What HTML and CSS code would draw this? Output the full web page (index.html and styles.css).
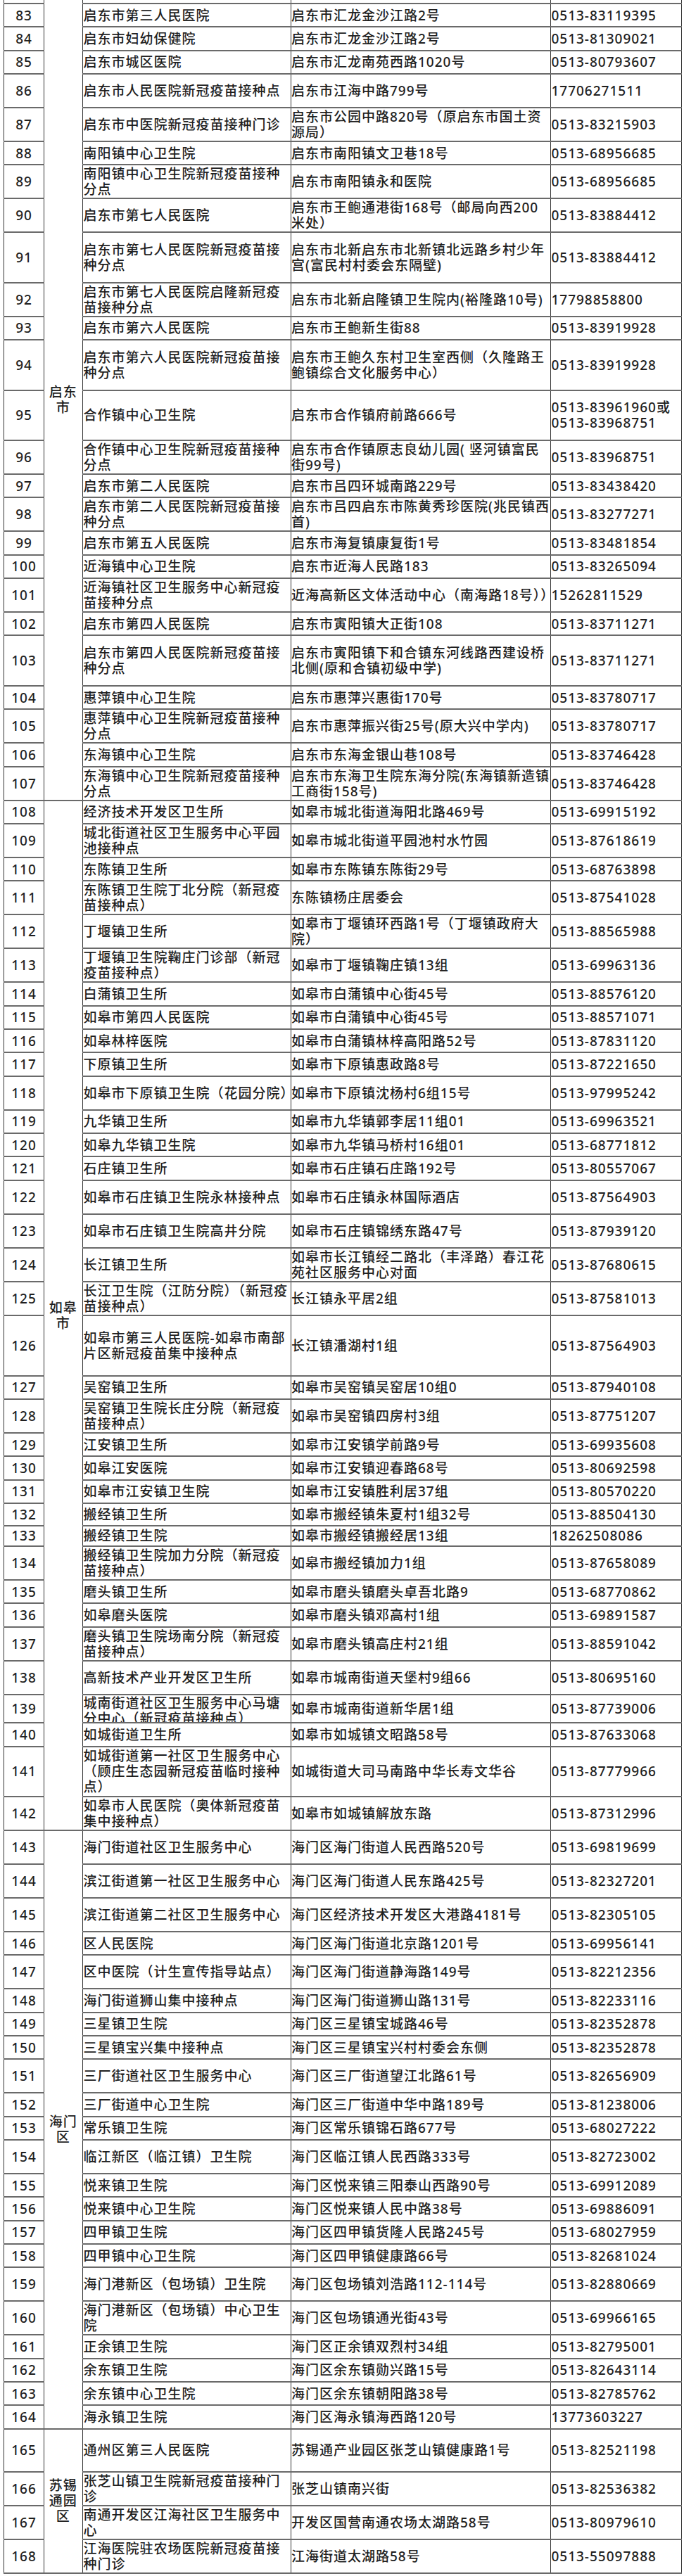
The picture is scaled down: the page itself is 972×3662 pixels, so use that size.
FILE: index.html
```html
<!DOCTYPE html>
<html lang="zh-CN">
<head>
<meta charset="utf-8">
<title>新冠疫苗接种点</title>
<link rel="stylesheet" href="styles.css">
</head>
<body>
<table class="sheet">
<colgroup><col class="col-n"><col class="col-c"><col class="col-m"><col class="col-a"><col class="col-p"></colgroup>
<tbody>
<tr class="hp"><td class="n"></td><td class="c" rowspan="26">启东市</td><td class="m"></td><td class="a"></td><td class="p"></td></tr>
<tr class="s"><td class="n">83</td><td class="m">启东市第三人民医院</td><td class="a">启东市汇龙金沙江路2号</td><td class="p">0513-83119395</td></tr>
<tr class="s"><td class="n">84</td><td class="m">启东市妇幼保健院</td><td class="a">启东市汇龙金沙江路2号</td><td class="p">0513-81309021</td></tr>
<tr class="s"><td class="n">85</td><td class="m">启东市城区医院</td><td class="a">启东市汇龙南苑西路1020号</td><td class="p">0513-80793607</td></tr>
<tr class="d"><td class="n">86</td><td class="m">启东市人民医院新冠疫苗接种点</td><td class="a">启东市江海中路799号</td><td class="p">17706271511</td></tr>
<tr class="d"><td class="n">87</td><td class="m">启东市中医院新冠疫苗接种门诊</td><td class="a">启东市公园中路820号（原启东市国土资源局）</td><td class="p">0513-83215903</td></tr>
<tr class="s"><td class="n">88</td><td class="m">南阳镇中心卫生院</td><td class="a">启东市南阳镇文卫巷18号</td><td class="p">0513-68956685</td></tr>
<tr class="d"><td class="n">89</td><td class="m">南阳镇中心卫生院新冠疫苗接种分点</td><td class="a">启东市南阳镇永和医院</td><td class="p">0513-68956685</td></tr>
<tr class="d"><td class="n">90</td><td class="m">启东市第七人民医院</td><td class="a">启东市王鲍通港街168号（邮局向西200米处）</td><td class="p">0513-83884412</td></tr>
<tr class="t"><td class="n">91</td><td class="m">启东市第七人民医院新冠疫苗接种分点</td><td class="a">启东市北新启东市北新镇北远路乡村少年宫(富民村村委会东隔壁)</td><td class="p">0513-83884412</td></tr>
<tr class="d"><td class="n">92</td><td class="m">启东市第七人民医院启隆新冠疫苗接种分点</td><td class="a">启东市北新启隆镇卫生院内(裕隆路10号)</td><td class="p">17798858800</td></tr>
<tr class="s"><td class="n">93</td><td class="m">启东市第六人民医院</td><td class="a">启东市王鲍新生街88</td><td class="p">0513-83919928</td></tr>
<tr class="t"><td class="n">94</td><td class="m">启东市第六人民医院新冠疫苗接种分点</td><td class="a">启东市王鲍久东村卫生室西侧（久隆路王鲍镇综合文化服务中心）</td><td class="p">0513-83919928</td></tr>
<tr class="t"><td class="n">95</td><td class="m">合作镇中心卫生院</td><td class="a">启东市合作镇府前路666号</td><td class="p">0513-83961960或0513-83968751</td></tr>
<tr class="d"><td class="n">96</td><td class="m">合作镇中心卫生院新冠疫苗接种分点</td><td class="a">启东市合作镇原志良幼儿园( 竖河镇富民街99号)</td><td class="p">0513-83968751</td></tr>
<tr class="s"><td class="n">97</td><td class="m">启东市第二人民医院</td><td class="a">启东市吕四环城南路229号</td><td class="p">0513-83438420</td></tr>
<tr class="d"><td class="n">98</td><td class="m">启东市第二人民医院新冠疫苗接种分点</td><td class="a">启东市吕四启东市陈黄秀珍医院(兆民镇西首)</td><td class="p">0513-83277271</td></tr>
<tr class="s"><td class="n">99</td><td class="m">启东市第五人民医院</td><td class="a">启东市海复镇康复街1号</td><td class="p">0513-83481854</td></tr>
<tr class="s"><td class="n">100</td><td class="m">近海镇中心卫生院</td><td class="a">启东市近海人民路183</td><td class="p">0513-83265094</td></tr>
<tr class="d"><td class="n">101</td><td class="m">近海镇社区卫生服务中心新冠疫苗接种分点</td><td class="a">近海高新区文体活动中心（南海路18号））</td><td class="p">15262811529</td></tr>
<tr class="s"><td class="n">102</td><td class="m">启东市第四人民医院</td><td class="a">启东市寅阳镇大正街108</td><td class="p">0513-83711271</td></tr>
<tr class="t"><td class="n">103</td><td class="m">启东市第四人民医院新冠疫苗接种分点</td><td class="a">启东市寅阳镇下和合镇东河线路西建设桥北侧(原和合镇初级中学)</td><td class="p">0513-83711271</td></tr>
<tr class="s"><td class="n">104</td><td class="m">惠萍镇中心卫生院</td><td class="a">启东市惠萍兴惠街170号</td><td class="p">0513-83780717</td></tr>
<tr class="d"><td class="n">105</td><td class="m">惠萍镇中心卫生院新冠疫苗接种分点</td><td class="a">启东市惠萍振兴街25号(原大兴中学内)</td><td class="p">0513-83780717</td></tr>
<tr class="s"><td class="n">106</td><td class="m">东海镇中心卫生院</td><td class="a">启东市东海金银山巷108号</td><td class="p">0513-83746428</td></tr>
<tr class="d"><td class="n">107</td><td class="m">东海镇中心卫生院新冠疫苗接种分点</td><td class="a">启东市东海卫生院东海分院(东海镇新造镇工商街158号)</td><td class="p">0513-83746428</td></tr>
<tr class="s"><td class="n">108</td><td class="c" rowspan="35">如皋市</td><td class="m">经济技术开发区卫生所</td><td class="a">如皋市城北街道海阳北路469号</td><td class="p">0513-69915192</td></tr>
<tr class="d"><td class="n">109</td><td class="m">城北街道社区卫生服务中心平园池接种点</td><td class="a">如皋市城北街道平园池村水竹园</td><td class="p">0513-87618619</td></tr>
<tr class="s"><td class="n">110</td><td class="m">东陈镇卫生所</td><td class="a">如皋市东陈镇东陈街29号</td><td class="p">0513-68763898</td></tr>
<tr class="d"><td class="n">111</td><td class="m">东陈镇卫生院丁北分院（新冠疫苗接种点）</td><td class="a">东陈镇杨庄居委会</td><td class="p">0513-87541028</td></tr>
<tr class="d"><td class="n">112</td><td class="m">丁堰镇卫生所</td><td class="a">如皋市丁堰镇环西路1号（丁堰镇政府大院）</td><td class="p">0513-88565988</td></tr>
<tr class="d"><td class="n">113</td><td class="m">丁堰镇卫生院鞠庄门诊部（新冠疫苗接种点）</td><td class="a">如皋市丁堰镇鞠庄镇13组</td><td class="p">0513-69963136</td></tr>
<tr class="s"><td class="n">114</td><td class="m">白蒲镇卫生所</td><td class="a">如皋市白蒲镇中心街45号</td><td class="p">0513-88576120</td></tr>
<tr class="s"><td class="n">115</td><td class="m">如皋市第四人民医院</td><td class="a">如皋市白蒲镇中心街45号</td><td class="p">0513-88571071</td></tr>
<tr class="s"><td class="n">116</td><td class="m">如皋林梓医院</td><td class="a">如皋市白蒲镇林梓高阳路52号</td><td class="p">0513-87831120</td></tr>
<tr class="s"><td class="n">117</td><td class="m">下原镇卫生所</td><td class="a">如皋市下原镇惠政路8号</td><td class="p">0513-87221650</td></tr>
<tr class="d"><td class="n">118</td><td class="m">如皋市下原镇卫生院（花园分院）</td><td class="a">如皋市下原镇沈杨村6组15号</td><td class="p">0513-97995242</td></tr>
<tr class="s"><td class="n">119</td><td class="m">九华镇卫生所</td><td class="a">如皋市九华镇郭李居11组01</td><td class="p">0513-69963521</td></tr>
<tr class="s"><td class="n">120</td><td class="m">如皋九华镇卫生院</td><td class="a">如皋市九华镇马桥村16组01</td><td class="p">0513-68771812</td></tr>
<tr class="s"><td class="n">121</td><td class="m">石庄镇卫生所</td><td class="a">如皋市石庄镇石庄路192号</td><td class="p">0513-80557067</td></tr>
<tr class="d"><td class="n">122</td><td class="m">如皋市石庄镇卫生院永林接种点</td><td class="a">如皋市石庄镇永林国际酒店</td><td class="p">0513-87564903</td></tr>
<tr class="d"><td class="n">123</td><td class="m">如皋市石庄镇卫生院高井分院</td><td class="a">如皋市石庄镇锦绣东路47号</td><td class="p">0513-87939120</td></tr>
<tr class="d"><td class="n">124</td><td class="m">长江镇卫生所</td><td class="a">如皋市长江镇经二路北（丰泽路）春江花苑社区服务中心对面</td><td class="p">0513-87680615</td></tr>
<tr class="d"><td class="n">125</td><td class="m">长江卫生院（江防分院）（新冠疫苗接种点）</td><td class="a">长江镇永平居2组</td><td class="p">0513-87581013</td></tr>
<tr class="h86"><td class="n">126</td><td class="m">如皋市第三人民医院-如皋市南部片区新冠疫苗集中接种点</td><td class="a">长江镇潘湖村1组</td><td class="p">0513-87564903</td></tr>
<tr class="s"><td class="n">127</td><td class="m">吴窑镇卫生所</td><td class="a">如皋市吴窑镇吴窑居10组0</td><td class="p">0513-87940108</td></tr>
<tr class="d"><td class="n">128</td><td class="m">吴窑镇卫生院长庄分院（新冠疫苗接种点）</td><td class="a">如皋市吴窑镇四房村3组</td><td class="p">0513-87751207</td></tr>
<tr class="s"><td class="n">129</td><td class="m">江安镇卫生所</td><td class="a">如皋市江安镇学前路9号</td><td class="p">0513-69935608</td></tr>
<tr class="s"><td class="n">130</td><td class="m">如皋江安医院</td><td class="a">如皋市江安镇迎春路68号</td><td class="p">0513-80692598</td></tr>
<tr class="s"><td class="n">131</td><td class="m">如皋市江安镇卫生院</td><td class="a">如皋市江安镇胜利居37组</td><td class="p">0513-80570220</td></tr>
<tr class="h32"><td class="n">132</td><td class="m">搬经镇卫生所</td><td class="a">如皋市搬经镇朱夏村1组32号</td><td class="p">0513-88504130</td></tr>
<tr class="h29"><td class="n">133</td><td class="m">搬经镇卫生院</td><td class="a">如皋市搬经镇搬经居13组</td><td class="p">18262508086</td></tr>
<tr class="d"><td class="n">134</td><td class="m">搬经镇卫生院加力分院（新冠疫苗接种点）</td><td class="a">如皋市搬经镇加力1组</td><td class="p">0513-87658089</td></tr>
<tr class="s"><td class="n">135</td><td class="m">磨头镇卫生所</td><td class="a">如皋市磨头镇磨头卓吾北路9</td><td class="p">0513-68770862</td></tr>
<tr class="s"><td class="n">136</td><td class="m">如皋磨头医院</td><td class="a">如皋市磨头镇邓高村1组</td><td class="p">0513-69891587</td></tr>
<tr class="d"><td class="n">137</td><td class="m">磨头镇卫生院场南分院（新冠疫苗接种点）</td><td class="a">如皋市磨头镇高庄村21组</td><td class="p">0513-88591042</td></tr>
<tr class="d"><td class="n">138</td><td class="m">高新技术产业开发区卫生所</td><td class="a">如皋市城南街道天堡村9组66</td><td class="p">0513-80695160</td></tr>
<tr class="h41"><td class="n">139</td><td class="m"><div class="clip">城南街道社区卫生服务中心马塘分中心（新冠疫苗接种点）</div></td><td class="a">如皋市城南街道新华居1组</td><td class="p">0513-87739006</td></tr>
<tr class="s"><td class="n">140</td><td class="m">如城街道卫生所</td><td class="a">如皋市如城镇文昭路58号</td><td class="p">0513-87633068</td></tr>
<tr class="t"><td class="n">141</td><td class="m">如城街道第一社区卫生服务中心（顾庄生态园新冠疫苗临时接种点）</td><td class="a">如城街道大司马南路中华长寿文华谷</td><td class="p">0513-87779966</td></tr>
<tr class="d"><td class="n">142</td><td class="m">如皋市人民医院（奥体新冠疫苗集中接种点）</td><td class="a">如皋市如城镇解放东路</td><td class="p">0513-87312996</td></tr>
<tr class="d"><td class="n">143</td><td class="c" rowspan="22">海门区</td><td class="m">海门街道社区卫生服务中心</td><td class="a">海门区海门街道人民西路520号</td><td class="p">0513-69819699</td></tr>
<tr class="d"><td class="n">144</td><td class="m">滨江街道第一社区卫生服务中心</td><td class="a">海门区海门街道人民东路425号</td><td class="p">0513-82327201</td></tr>
<tr class="d"><td class="n">145</td><td class="m">滨江街道第二社区卫生服务中心</td><td class="a">海门区经济技术开发区大港路4181号</td><td class="p">0513-82305105</td></tr>
<tr class="s"><td class="n">146</td><td class="m">区人民医院</td><td class="a">海门区海门街道北京路1201号</td><td class="p">0513-69956141</td></tr>
<tr class="d"><td class="n">147</td><td class="m">区中医院（计生宣传指导站点）</td><td class="a">海门区海门街道静海路149号</td><td class="p">0513-82212356</td></tr>
<tr class="s"><td class="n">148</td><td class="m">海门街道狮山集中接种点</td><td class="a">海门区海门街道狮山路131号</td><td class="p">0513-82233116</td></tr>
<tr class="s"><td class="n">149</td><td class="m">三星镇卫生院</td><td class="a">海门区三星镇宝城路46号</td><td class="p">0513-82352878</td></tr>
<tr class="s"><td class="n">150</td><td class="m">三星镇宝兴集中接种点</td><td class="a">海门区三星镇宝兴村村委会东侧</td><td class="p">0513-82352878</td></tr>
<tr class="d"><td class="n">151</td><td class="m">三厂街道社区卫生服务中心</td><td class="a">海门区三厂街道望江北路61号</td><td class="p">0513-82656909</td></tr>
<tr class="s"><td class="n">152</td><td class="m">三厂街道中心卫生院</td><td class="a">海门区三厂街道中华中路189号</td><td class="p">0513-81238006</td></tr>
<tr class="s"><td class="n">153</td><td class="m">常乐镇卫生院</td><td class="a">海门区常乐镇锦石路677号</td><td class="p">0513-68027222</td></tr>
<tr class="d"><td class="n">154</td><td class="m">临江新区（临江镇）卫生院</td><td class="a">海门区临江镇人民西路333号</td><td class="p">0513-82723002</td></tr>
<tr class="s"><td class="n">155</td><td class="m">悦来镇卫生院</td><td class="a">海门区悦来镇三阳泰山西路90号</td><td class="p">0513-69912089</td></tr>
<tr class="s"><td class="n">156</td><td class="m">悦来镇中心卫生院</td><td class="a">海门区悦来镇人民中路38号</td><td class="p">0513-69886091</td></tr>
<tr class="s"><td class="n">157</td><td class="m">四甲镇卫生院</td><td class="a">海门区四甲镇货隆人民路245号</td><td class="p">0513-68027959</td></tr>
<tr class="s"><td class="n">158</td><td class="m">四甲镇中心卫生院</td><td class="a">海门区四甲镇健康路66号</td><td class="p">0513-82681024</td></tr>
<tr class="d"><td class="n">159</td><td class="m">海门港新区（包场镇）卫生院</td><td class="a">海门区包场镇刘浩路112-114号</td><td class="p">0513-82880669</td></tr>
<tr class="d"><td class="n">160</td><td class="m">海门港新区（包场镇）中心卫生院</td><td class="a">海门区包场镇通光街43号</td><td class="p">0513-69966165</td></tr>
<tr class="s"><td class="n">161</td><td class="m">正余镇卫生院</td><td class="a">海门区正余镇双烈村34组</td><td class="p">0513-82795001</td></tr>
<tr class="s"><td class="n">162</td><td class="m">余东镇卫生院</td><td class="a">海门区余东镇勋兴路15号</td><td class="p">0513-82643114</td></tr>
<tr class="s"><td class="n">163</td><td class="m">余东镇中心卫生院</td><td class="a">海门区余东镇朝阳路38号</td><td class="p">0513-82785762</td></tr>
<tr class="s"><td class="n">164</td><td class="m">海永镇卫生院</td><td class="a">海门区海永镇海西路120号</td><td class="p">13773603227</td></tr>
<tr class="h62"><td class="n">165</td><td class="c" rowspan="4">苏锡通园区</td><td class="m">通州区第三人民医院</td><td class="a">苏锡通产业园区张芝山镇健康路1号</td><td class="p">0513-82521198</td></tr>
<tr class="d"><td class="n">166</td><td class="m">张芝山镇卫生院新冠疫苗接种门诊</td><td class="a">张芝山镇南兴街</td><td class="p">0513-82536382</td></tr>
<tr class="d"><td class="n">167</td><td class="m">南通开发区江海社区卫生服务中心</td><td class="a">开发区国营南通农场太湖路58号</td><td class="p">0513-80979610</td></tr>
<tr class="d"><td class="n">168</td><td class="m">江海医院驻农场医院新冠疫苗接种门诊</td><td class="a">江海街道太湖路58号</td><td class="p">0513-55097888</td></tr>
</tbody>
</table>
</body>
</html>
```

FILE: styles.css
```css
html, body {
  margin: 0;
  padding: 0;
  background: #ffffff;
}

body {
  width: 972px;
  font-family: "Noto Sans", "Noto Sans CJK SC", sans-serif;
  font-size: 19px;
  font-weight: 500;
  letter-spacing: 1px;
  line-height: 22px;
  color: #1f1f1f;
}

.sheet {
  margin-left: 5px;
  width: 963.4px;
  table-layout: fixed;
  border-collapse: collapse;
  border-top: hidden;
}

.col-n { width: 57px; }
.col-c { width: 54.5px; }
.col-m { width: 296.5px; }
.col-a { width: 369.4px; }
.col-p { width: 186px; }

.sheet td {
  padding: 0 0 0 1px;
  vertical-align: middle;
  border-top: 2px solid #6a6a6a;
  border-bottom: 2px solid #6a6a6a;
  border-left: 1px solid #333333;
  border-right: 1px solid #333333;
  word-break: normal;
  overflow-wrap: break-word;
}

.sheet td.a { padding-left: 0; }
.sheet td.p { padding-left: 0; }

.sheet td.n {
  text-align: center;
  padding: 0;
}

.sheet td.c {
  text-align: center;
  padding: 0 3px;
}

.clip {
  height: 38px;
  overflow: hidden;
}

.hp { height: 5px; }
.s { height: 33.33px; }
.d { height: 48px; }
.t { height: 71.5px; }
.h29 { height: 29px; }
.h32 { height: 32px; }
.h41 { height: 40.7px; }
.h62 { height: 61.7px; }
.h86 { height: 86px; }
```
